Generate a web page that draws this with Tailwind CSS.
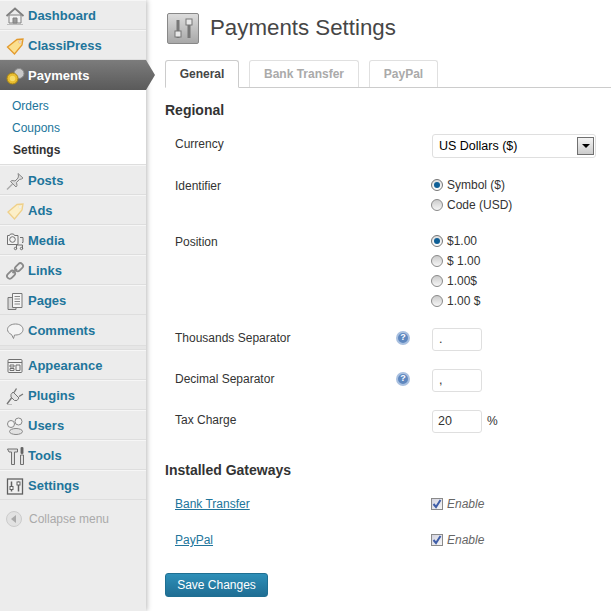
<!DOCTYPE html>
<html lang="en">
<head>
  <meta charset="UTF-8" />
  <title>Payments Settings</title>
  <script src="https://cdn.jsdelivr.net/npm/@tailwindcss/browser@4"></script>
</head>
<body class="bg-white font-['Liberation_Sans',Arial,sans-serif] text-[12px] text-[#333]">
  <div class="flex w-[611px] h-[611px] overflow-hidden">

    <!-- Sidebar -->
    <aside class="relative w-[146px] shrink-0 bg-[#ececec] shadow-[1px_0_5px_rgba(0,0,0,0.28)]">
      <a class="flex items-center h-[30px] pt-[2px] border-b border-[#dedede] shadow-[inset_0_1px_0_#f6f6f6] text-[13px] font-bold text-[#21759b]">
        <svg class="w-[20px] h-[20px] ml-[5px] mr-[3px]" viewBox="0 0 20 20" fill="#f2f2f2" stroke="#808080"><path d="M4 17V9h12v8z" /><path d="M1.500 10 10 2.500l8.500 7.500" fill="none" stroke-width="1.800" /><path d="M8 17v-5h4v5z" fill="#999" /><path d="M2 18.500h16" stroke="#bbb" /></svg>Dashboard
      </a>
      <a class="flex items-center h-[30px] pt-[2px] border-b border-[#dedede] shadow-[inset_0_1px_0_#f6f6f6] text-[13px] font-bold text-[#21759b]">
        <svg class="w-[20px] h-[20px] ml-[5px] mr-[3px]" viewBox="0 0 20 20"><path d="M2.500 11 12 3.500l6-.5-1 6-7.500 9z" fill="#fbe08f" stroke="#e39a2d" stroke-width="1.300" /><circle cx="15" cy="6" r="1.200" fill="#fff" stroke="#c98" stroke-width=".6" /></svg>ClassiPress
      </a>
      <a class="relative z-10 flex items-center w-[155px] h-[30px] pt-[1px] bg-gradient-to-b from-[#7c7c7c] to-[#5a5a5a] text-[13px] font-bold text-white [clip-path:polygon(0_0,146px_0,155px_15px,146px_30px,0_30px)]">
        <svg class="w-[20px] h-[20px] ml-[5px] mr-[3px]" viewBox="0 0 20 20"><circle cx="14" cy="7.500" r="5" fill="#c9c9c9" stroke="#8a8a8a" /><circle cx="7.500" cy="12.500" r="5.500" fill="#e9bd2f" stroke="#a88414" /><circle cx="7.500" cy="12.500" r="2.800" fill="#f6dc68" /></svg>Payments
      </a>
      <div class="bg-white h-[75px] pt-[5px] border-b border-[#dedede] text-[#21759b]">
        <a class="block h-[22px] leading-[22px] pl-[12px]">Orders</a>
        <a class="block h-[22px] leading-[22px] pl-[12px]">Coupons</a>
        <a class="block h-[22px] leading-[22px] pl-[13px] font-bold text-[#333]">Settings</a>
      </div>
      <a class="flex items-center h-[30px] pt-[2px] border-b border-[#dedede] shadow-[inset_0_1px_0_#f6f6f6] text-[13px] font-bold text-[#21759b]">
        <svg class="w-[20px] h-[20px] ml-[5px] mr-[3px]" viewBox="0 0 20 20" fill="#dcdcdc" stroke="#888"><path d="M13 2.500 18 7l-1.500 1-2 .5-3 3 .5 3-1 1.500L5.500 10.500 7 9.500l3 .5 3-3 .5-2z" /><path d="M7.500 13 2 18.500" stroke="#aaa" stroke-width="1.400" /></svg>Posts
      </a>
      <a class="flex items-center h-[30px] pt-[2px] border-b border-[#dedede] shadow-[inset_0_1px_0_#f6f6f6] text-[13px] font-bold text-[#21759b]">
        <svg class="w-[20px] h-[20px] ml-[5px] mr-[3px]" viewBox="0 0 20 20"><path d="M3 11 12 3.500l6-.5-1 6-7.500 9z" fill="#fcefc8" stroke="#efd08a" stroke-width="1.300" /><circle cx="15" cy="6" r="1.200" fill="#fff" stroke="#ddc" stroke-width=".6" /></svg>Ads
      </a>
      <a class="flex items-center h-[30px] pt-[2px] border-b border-[#dedede] shadow-[inset_0_1px_0_#f6f6f6] text-[13px] font-bold text-[#21759b]">
        <svg class="w-[20px] h-[20px] ml-[5px] mr-[3px]" viewBox="0 0 20 20" fill="none" stroke="#707070"><path d="M2.500 4.500h2l1-1.500h3l1 1.500h3.500v9H2.500z" fill="#f2f2f2" /><circle cx="7.500" cy="8.500" r="2.800" /><path d="M15 6.500h3v5h-1M11.500 18v-4h6v4" /><circle cx="10.500" cy="17.500" r="1.200" /><circle cx="16.500" cy="17.500" r="1.200" /></svg>Media
      </a>
      <a class="flex items-center h-[30px] pt-[2px] border-b border-[#dedede] shadow-[inset_0_1px_0_#f6f6f6] text-[13px] font-bold text-[#21759b]">
        <svg class="w-[20px] h-[20px] ml-[5px] mr-[3px]" viewBox="0 0 20 20" fill="none" stroke="#8a8a8a" stroke-width="1.800"><rect x="1.500" y="11" width="9" height="5.500" rx="2.700" transform="rotate(-45 6 13.700)" /><rect x="9.500" y="3.500" width="9" height="5.500" rx="2.700" transform="rotate(-45 14 6.200)" /><path d="M7.500 12 12 8" /></svg>Links
      </a>
      <a class="flex items-center h-[30px] pt-[2px] border-b border-[#dedede] shadow-[inset_0_1px_0_#f6f6f6] text-[13px] font-bold text-[#21759b]">
        <svg class="w-[20px] h-[20px] ml-[5px] mr-[3px]" viewBox="0 0 20 20" fill="#d8d8d8" stroke="#777"><path d="M3 6.500h8v12H3z" /><path d="M7.500 2.500h9.500v14H7.500z" fill="#f5f5f5" /><path d="M9.500 5.500h5.500M9.500 8h5.500M9.500 10.500h5.500M9.500 13h5.500" stroke="#888" /></svg>Pages
      </a>
      <a class="flex items-center h-[30px] pt-[1px] text-[13px] font-bold text-[#21759b]">
        <svg class="w-[20px] h-[20px] ml-[5px] mr-[3px]" viewBox="0 0 20 20" fill="#f4f4f4" stroke="#8a8a8a"><path d="M10.500 3c4.500 0 7.500 2.300 7.500 5.500S15 14 10.500 14H9.500l-1 3.500-2-4C4 12.500 2.500 10.500 2.500 8.500 2.500 5.300 6 3 10.500 3z" /></svg>Comments
      </a>
      <div class="h-[5px] border-y border-[#dedede] bg-[#e6e6e6]"></div>
      <a class="flex items-center h-[30px] pt-[2px] border-b border-[#dedede] shadow-[inset_0_1px_0_#f6f6f6] text-[13px] font-bold text-[#21759b]">
        <svg class="w-[20px] h-[20px] ml-[5px] mr-[3px]" viewBox="0 0 20 20" fill="none" stroke="#707070"><rect x="3" y="3.500" width="14" height="13" rx="1" fill="#f2f2f2" /><path d="M3 6.500h14" /><path d="M5 9h4v2H5zM5 12.500h4v2H5zM11 9h4v5.500h-4z" /></svg>Appearance
      </a>
      <a class="flex items-center h-[30px] pt-[2px] border-b border-[#dedede] shadow-[inset_0_1px_0_#f6f6f6] text-[13px] font-bold text-[#21759b]">
        <svg class="w-[20px] h-[20px] ml-[5px] mr-[3px]" viewBox="0 0 20 20" fill="#e4e4e4" stroke="#777"><path d="M8 6 14 12l-2 2.500H9.500L6 11V8.500z" /><path d="M11.500 2.500 9 6.500M18 8l-4 2.500M6.500 12 2 18" fill="none" stroke-width="1.400" /><path d="M2 18.500h5" stroke="#bbb" /></svg>Plugins
      </a>
      <a class="flex items-center h-[30px] pt-[2px] border-b border-[#dedede] shadow-[inset_0_1px_0_#f6f6f6] text-[13px] font-bold text-[#21759b]">
        <svg class="w-[20px] h-[20px] ml-[5px] mr-[3px]" viewBox="0 0 20 20" fill="#f4f4f4" stroke="#888"><circle cx="13.500" cy="5.500" r="3.500" /><circle cx="6" cy="8" r="3.500" /><ellipse cx="11" cy="15.500" rx="6.500" ry="3" fill="#e2e2e2" /></svg>Users
      </a>
      <a class="flex items-center h-[30px] pt-[2px] border-b border-[#dedede] shadow-[inset_0_1px_0_#f6f6f6] text-[13px] font-bold text-[#21759b]">
        <svg class="w-[20px] h-[20px] ml-[5px] mr-[3px]" viewBox="0 0 20 20" fill="#e0e0e0" stroke="#707070"><path d="M2.500 3h10v3h-3v12.500h-3V6H4z" /><path d="M16 1.500h2v6h-2z" fill="#555" /><path d="M15.500 9h3v9.500h-3z" /></svg>Tools
      </a>
      <a class="flex items-center h-[30px] pt-[2px] border-b border-[#dedede] shadow-[inset_0_1px_0_#f6f6f6] text-[13px] font-bold text-[#21759b]">
        <svg class="w-[20px] h-[20px] ml-[5px] mr-[3px]" viewBox="0 0 20 20" fill="none" stroke="#606060"><rect x="2.500" y="3" width="15" height="15" fill="#f0f0f0" stroke-width="1.300" /><path d="M6.500 5.500v10M13.500 5.500v10" stroke-width="1.500" /><rect x="5" y="10.500" width="3" height="3" fill="#fff" /><rect x="12" y="6" width="3" height="3" fill="#fff" /></svg>Settings
      </a>
      <div class="flex items-center h-[37px] text-[12px] text-[#aaa]">
        <span class="flex items-center justify-center w-[16px] h-[16px] ml-[6px] mr-[7px] rounded-full bg-[#e2e2e2] border border-[#ccc]">
          <span class="w-0 h-0 -ml-[1px] border-y-[4px] border-y-transparent border-r-[5px] border-r-[#aaa]"></span>
        </span>Collapse menu
      </div>
    </aside>

    <!-- Content -->
    <main class="flex-1 min-w-0 pl-[19px]">
      <header class="flex items-start h-[60px] pt-[13px] pl-[2px]">
        <div class="flex items-center justify-center w-[32px] h-[31px] rounded-[2px] border border-[#888] bg-gradient-to-b from-[#dcdcdc] to-[#a8a8a8]">
          <svg class="w-[26px] h-[26px]" viewBox="0 0 26 26" fill="#e8e8e8" stroke="#777"><path d="M8 4v18M19 4v18" stroke-width="3" /><rect x="5" y="15" width="6" height="6" /><rect x="16" y="3" width="6" height="6" /></svg>
        </div>
        <h1 class="ml-[11px] text-[22.3px] leading-[30px] text-[#464646]">Payments Settings</h1>
      </header>

      <nav class="flex items-end h-[28px] border-b border-[#ccc] text-[12px] font-bold">
        <a class="flex items-center justify-center w-[74px] h-[28px] -mb-px bg-white border border-[#ccc] border-b-white rounded-t-[3px] text-[#464646]">General</a>
        <a class="flex items-center justify-center w-[110px] h-[27px] ml-[10px] border border-[#e0e0e0] border-b-0 rounded-t-[3px] text-[#aaa]">Bank Transfer</a>
        <a class="flex items-center justify-center w-[69px] h-[27px] ml-[10px] border border-[#e0e0e0] border-b-0 rounded-t-[3px] text-[#aaa]">PayPal</a>
      </nav>

      <h2 class="mt-[13px] h-[18px] leading-[18px] text-[14px] font-bold text-[#333]">Regional</h2>

      <div class="mt-[12px]">
        <div class="flex items-start h-[42px]">
          <div class="w-[267px] pl-[10px] leading-[26px]">Currency</div>
          <div class="flex items-center justify-between w-[164px] h-[24px] mt-[3px] pl-[6px] pr-[1px] rounded-[3px] border border-[#dfdfdf] text-[12.5px] text-black">
            US Dollars ($)
            <span class="flex items-center justify-center w-[17px] h-[18px] border border-[#707070] bg-gradient-to-b from-[#f4f4f4] to-[#ccc]">
              <span class="w-0 h-0 border-x-[4px] border-x-transparent border-t-[4px] border-t-black"></span>
            </span>
          </div>
        </div>

        <div class="flex items-start h-[56px]">
          <div class="w-[267px] pl-[10px] leading-[26px]">Identifier</div>
          <div class="pt-[2px]">
            <div class="flex items-center h-[20px] gap-[4px]">
              <span class="flex items-center justify-center w-[12px] h-[12px] -ml-[1px] rounded-full border border-[#767676] bg-gradient-to-b from-[#ddd] to-white"><span class="w-[6px] h-[6px] rounded-full bg-[#0f5f96]"></span></span>
              Symbol ($)
            </div>
            <div class="flex items-center h-[20px] gap-[4px]">
              <span class="w-[12px] h-[12px] -ml-[1px] rounded-full border border-[#8a8a8a] bg-gradient-to-b from-[#ccc] to-[#f6f6f6]"></span>
              Code (USD)
            </div>
          </div>
        </div>

        <div class="flex items-start h-[96px]">
          <div class="w-[267px] pl-[10px] leading-[26px]">Position</div>
          <div class="pt-[2px]">
            <div class="flex items-center h-[20px] gap-[4px]">
              <span class="flex items-center justify-center w-[12px] h-[12px] -ml-[1px] rounded-full border border-[#767676] bg-gradient-to-b from-[#ddd] to-white"><span class="w-[6px] h-[6px] rounded-full bg-[#0f5f96]"></span></span>
              $1.00
            </div>
            <div class="flex items-center h-[20px] gap-[4px]">
              <span class="w-[12px] h-[12px] -ml-[1px] rounded-full border border-[#8a8a8a] bg-gradient-to-b from-[#ccc] to-[#f6f6f6]"></span>
              $ 1.00
            </div>
            <div class="flex items-center h-[20px] gap-[4px]">
              <span class="w-[12px] h-[12px] -ml-[1px] rounded-full border border-[#8a8a8a] bg-gradient-to-b from-[#ccc] to-[#f6f6f6]"></span>
              1.00$
            </div>
            <div class="flex items-center h-[20px] gap-[4px]">
              <span class="w-[12px] h-[12px] -ml-[1px] rounded-full border border-[#8a8a8a] bg-gradient-to-b from-[#ccc] to-[#f6f6f6]"></span>
              1.00 $
            </div>
          </div>
        </div>

        <div class="flex items-start h-[41px]">
          <div class="w-[230px] pl-[10px] leading-[26px]">Thousands Separator</div>
          <div class="flex items-center w-[37px] h-[26px]">
            <span class="flex items-center justify-center w-[14px] h-[14px] ml-[1px] rounded-full border-2 border-[#a9c0e0] bg-[#5f88bf] text-[9px] font-bold text-white">?</span>
          </div>
          <div class="w-[50px] h-[23px] mt-[3px] pl-[6px] leading-[21px] rounded-[3px] border border-[#dfdfdf] text-[12.5px]">.</div>
        </div>

        <div class="flex items-start h-[41px]">
          <div class="w-[230px] pl-[10px] leading-[26px]">Decimal Separator</div>
          <div class="flex items-center w-[37px] h-[26px]">
            <span class="flex items-center justify-center w-[14px] h-[14px] ml-[1px] rounded-full border-2 border-[#a9c0e0] bg-[#5f88bf] text-[9px] font-bold text-white">?</span>
          </div>
          <div class="w-[50px] h-[23px] mt-[3px] pl-[6px] leading-[21px] rounded-[3px] border border-[#dfdfdf] text-[12.5px]">,</div>
        </div>

        <div class="flex items-start h-[41px]">
          <div class="w-[267px] pl-[10px] leading-[26px]">Tax Charge</div>
          <div class="w-[50px] h-[23px] mt-[3px] pl-[5px] leading-[21px] rounded-[3px] border border-[#dfdfdf] text-[12.5px]">20</div>
          <span class="ml-[5px] mt-[3px] leading-[23px]">%</span>
        </div>
      </div>

      <h2 class="mt-[13px] h-[18px] leading-[18px] text-[14px] font-bold text-[#333]">Installed Gateways</h2>

      <div class="mt-[7px]">
        <div class="flex items-center h-[36px]">
          <a class="w-[266px] pl-[10px] text-[#21759b] underline">Bank Transfer</a>
          <span class="flex items-center justify-center w-[12px] h-[12px] border border-[#8a8a8a] bg-gradient-to-br from-[#d4d4e0] to-[#f6f6f6]">
            <svg class="w-[10px] h-[10px]" viewBox="0 0 10 10" fill="none" stroke="#3f5ea8" stroke-width="2"><path d="M1.500 5 4 8l4.500-7" /></svg>
          </span>
          <span class="ml-[4px] italic text-[#666]">Enable</span>
        </div>
        <div class="flex items-center h-[36px]">
          <a class="w-[266px] pl-[10px] text-[#21759b] underline">PayPal</a>
          <span class="flex items-center justify-center w-[12px] h-[12px] border border-[#8a8a8a] bg-gradient-to-br from-[#d4d4e0] to-[#f6f6f6]">
            <svg class="w-[10px] h-[10px]" viewBox="0 0 10 10" fill="none" stroke="#3f5ea8" stroke-width="2"><path d="M1.500 5 4 8l4.500-7" /></svg>
          </span>
          <span class="ml-[4px] italic text-[#666]">Enable</span>
        </div>
      </div>

      <button class="mt-[15px] w-[103px] h-[24px] rounded-[3px] border border-[#1f6f92] bg-gradient-to-b from-[#2e8fb8] to-[#1f6e94] text-[12px] text-white">Save Changes</button>
    </main>
  </div>
</body>
</html>
